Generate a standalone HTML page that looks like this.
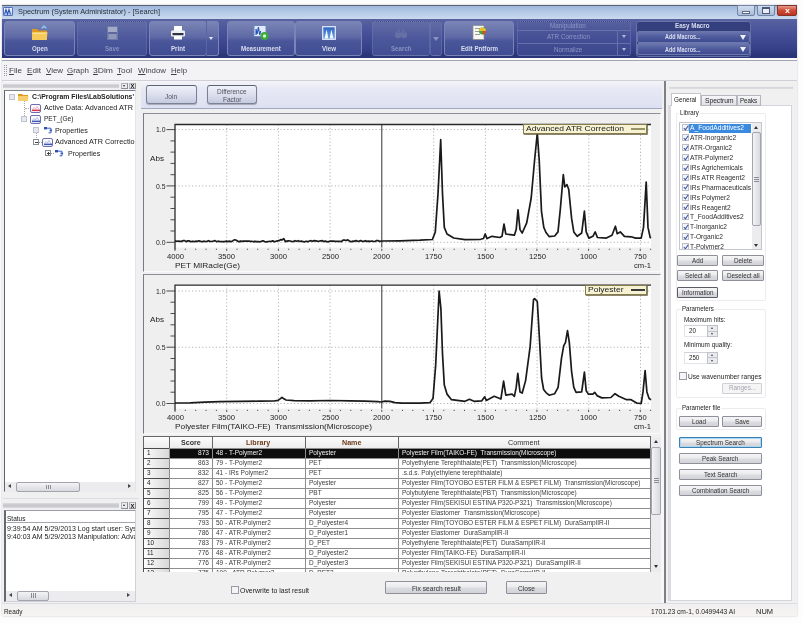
<!DOCTYPE html>
<html><head><meta charset="utf-8"><title>Spectrum</title><style>
*{box-sizing:border-box;margin:0;padding:0}
html,body{width:803px;height:623px;overflow:hidden;background:#fdfdfd;font-family:"Liberation Sans",sans-serif;}
body{position:relative;filter:blur(0.5px)}
.a{position:absolute}
.t{position:absolute;white-space:nowrap;line-height:1;transform-origin:0 50%}
.btn{position:absolute;border:1px solid #8f909a;border-radius:1px;background:linear-gradient(#f5f5f7,#ebebee 48%,#dcdde1 52%,#d2d3d9)}
.tb{position:absolute;top:21px;height:35px;border:1px solid #7a84b6;border-radius:3px;background:linear-gradient(#7a84b5,#5f6aa6 45%,#4a569a 58%,#414d93);}
.tb.dis{background:linear-gradient(#616ca6,#4c589b 50%,#424e94);border:1px dotted #6f7ab0}
</style></head><body>
<div class="a" style="left:2px;top:5px;width:795px;height:611px;background:#f0f0f1;box-shadow:0 0 2px #c4c8d0"></div>
<div class="a" style="left:2px;top:5px;width:795px;height:14px;background:linear-gradient(#9db7db,#b6cbe7 50%,#c9d9ee);border-top:1px solid #5c6474"></div>
<div class="a" style="left:3px;top:7px;width:10px;height:9px;background:linear-gradient(#f4f7fc,#b9cdf0);border:1px solid #5570b4;border-radius:1px"></div>
<svg class="a" style="left:4px;top:8px" width="8" height="7"><path d="M0.5 6.5l1.5-5 1.5 5 1.5-5 1.5 5" stroke="#2f55b4" stroke-width="1.1" fill="none"/></svg>
<div class="t" style="left:18.0px;top:8.4px;font-size:8px;color:#2a2f3a;transform:scaleX(0.920);">Spectrum (System Administrator) - [Search]</div>
<div class="a" style="left:737px;top:5px;width:18px;height:11px;background:linear-gradient(#d2deef,#a9bbd8);border:1px solid #7385a5;border-radius:0 0 2px 2px"></div>
<div class="a" style="left:742px;top:11px;width:8px;height:3px;background:#fff;border:1px solid #5a6a88"></div>
<div class="a" style="left:757px;top:5px;width:18px;height:11px;background:linear-gradient(#d2deef,#a9bbd8);border:1px solid #7385a5;border-radius:0 0 2px 2px"></div>
<div class="a" style="left:762px;top:7px;width:8px;height:7px;border:1px solid #4a5a78;border-top-width:2px;background:#e8eef8"></div>
<div class="a" style="left:777px;top:5px;width:20px;height:11px;background:linear-gradient(#e39a88,#cf4a34 50%,#bb3420);border:1px solid #84332a;border-radius:0 0 2px 2px"></div>
<div class="t" style="left:784.6px;top:6.9px;font-size:8px;font-weight:bold;color:#fff;transform:scaleX(1.100);">x</div>
<div class="a" style="left:2px;top:19px;width:795px;height:39px;background:linear-gradient(#5863a1,#46519a 35%,#36418a 75%,#2b3679 93%,#2a3577)"></div>
<div class="a" style="left:2px;top:58px;width:795px;height:2px;background:#fbfbfc"></div>
<div class="tb" style="left:4px;width:71px"><svg class="a" style="left:50%;margin-left:-8.5px;top:3px" width="17" height="16" viewBox="0 0 17 16"><path d="M1 4h5l1.5 1.5H16V15H1z" fill="#dc9a22"/><path d="M1 7h15.5l-0.8 8H1z" fill="#f6cb5a"/><path d="M2 8h13v1H2z" fill="#fbe29a"/><path d="M10 3l3-3 3 3-1.5 0.8-1.5-1.6-1.5 1.6z" fill="#86c8ee"/></svg></div>
<div class="t" style="left:31.6px;top:45.5px;font-size:6.5px;font-weight:bold;color:#dadef0;transform:scaleX(0.950);">Open</div>
<div class="tb dis" style="left:77px;width:70px"><svg class="a" style="left:50%;margin-left:-6.5px;top:4px" width="13" height="14" viewBox="0 0 13 14"><rect x="1" y="0" width="11" height="14" fill="#6e78a6"/><rect x="2" y="1" width="9" height="5" fill="#a2aac8"/><rect x="2.5" y="8" width="8" height="5" fill="#8f98bc"/><rect x="2.5" y="6.5" width="8" height="1" fill="#4a568f"/></svg></div>
<div class="t" style="left:104.8px;top:45.5px;font-size:6.5px;font-weight:bold;color:#8791c0;transform:scaleX(0.950);">Save</div>
<div class="tb" style="left:149px;width:58px"><svg class="a" style="left:50%;margin-left:-8.0px;top:4px" width="16" height="14" viewBox="0 0 16 14"><rect x="4" y="0" width="8" height="5" fill="#fdfdfd"/><rect x="1" y="4.5" width="14" height="6" rx="1.2" fill="#eceef4"/><rect x="2.5" y="7" width="11" height="2.2" fill="#2f3442"/><rect x="4" y="10" width="8" height="3.5" fill="#fdfdfd"/></svg></div>
<div class="t" style="left:171.0px;top:45.5px;font-size:6.5px;font-weight:bold;color:#dadef0;transform:scaleX(0.950);">Print</div>
<div class="tb" style="left:206px;width:13px;border-left-color:#5a66a3;border-radius:0 3px 3px 0"></div>
<div class="a" style="left:209px;top:36.5px;border:2.7px solid transparent;border-top:3.6px solid #e6e9f6"></div>
<div class="tb" style="left:227px;width:68px"><svg class="a" style="left:50%;margin-left:-8.0px;top:3px" width="16" height="16" viewBox="0 0 16 16"><rect x="1" y="0.5" width="12" height="11" fill="#e3ebf8" stroke="#6a86c2" stroke-width="1"/><path d="M3 10V4l1.2 5 1.2-7 1.3 8 1-4" stroke="#2b58b8" stroke-width="1.1" fill="none"/><circle cx="11.5" cy="11" r="4" fill="#3aa93a"/><circle cx="11.5" cy="11" r="1.7" fill="#d4f0cf"/></svg></div>
<div class="t" style="left:241.1px;top:45.5px;font-size:6.5px;font-weight:bold;color:#dadef0;transform:scaleX(0.950);">Measurement</div>
<div class="tb" style="left:295px;width:67px"><svg class="a" style="left:50%;margin-left:-7.0px;top:4px" width="14" height="14" viewBox="0 0 14 14"><defs><linearGradient id="vg" x1="0" y1="0" x2="0" y2="1"><stop offset="0" stop-color="#2f62c0"/><stop offset="1" stop-color="#6aa6ea"/></linearGradient></defs><rect x="0.7" y="0.7" width="12.6" height="12.6" fill="url(#vg)" stroke="#e8eefa" stroke-width="1.2"/><path d="M2.5 12.5l2.2-9 1.6 9h1.4l1.6-9 2.2 9z" fill="#f4f8ff"/></svg></div>
<div class="t" style="left:321.5px;top:45.5px;font-size:6.5px;font-weight:bold;color:#dadef0;transform:scaleX(0.950);">View</div>
<div class="tb dis" style="left:372px;width:58px"><svg class="a" style="left:50%;margin-left:-8.0px;top:5px" width="16" height="12" viewBox="0 0 16 12"><circle cx="5" cy="8" r="3.2" fill="#6570a6"/><circle cx="11" cy="8" r="3.2" fill="#6570a6"/><path d="M3 6l2-5h2v4h2V1h2l2 5z" fill="#5f6aa2"/></svg></div>
<div class="t" style="left:390.7px;top:45.5px;font-size:6.5px;font-weight:bold;color:#8791c0;transform:scaleX(0.950);">Search</div>
<div class="tb dis" style="left:430px;width:12px"></div>
<div class="a" style="left:433px;top:37px;border:3px solid transparent;border-top:4px solid #8a93c0"></div>
<div class="tb" style="left:444px;width:70px"><svg class="a" style="left:50%;margin-left:-7.5px;top:3px" width="15" height="16" viewBox="0 0 15 16"><rect x="1" y="0.5" width="11" height="14" fill="#f6f6f2" stroke="#8a8a8a" stroke-width="0.7"/><rect x="3" y="3" width="5" height="1" fill="#9a9a9a"/><rect x="3" y="6" width="4" height="1" fill="#9a9a9a"/><rect x="3" y="9" width="5" height="1" fill="#9a9a9a"/><circle cx="10.5" cy="6" r="3.6" fill="#3fa83f"/><path d="M7 6a3.5 3.5 0 0 1 7 0z" fill="#e8c02a"/><path d="M10.5 6v3.6a3.6 3.6 0 0 0 3.6-3.6z" fill="#d44a2a"/></svg></div>
<div class="t" style="left:460.5px;top:45.5px;font-size:6.5px;font-weight:bold;color:#dadef0;transform:scaleX(0.950);">Edit Pntform</div>
<div class="tb dis" style="left:517px;width:114px;background:linear-gradient(#55609f,#444f95 50%,#3b478d)"></div>
<div class="t" style="left:550.1px;top:23.0px;font-size:6.5px;color:#8d97c5;transform:scaleX(0.970);">Manipulation</div>
<div class="a" style="left:518px;top:30px;width:112px;height:1px;background:#6671ab"></div>
<div class="t" style="left:546.5px;top:34.0px;font-size:6.5px;color:#8d97c5;transform:scaleX(0.970);">ATR Correction</div>
<div class="a" style="left:621.8px;top:35.3px;border:2.5px solid transparent;border-top:3.5px solid #b2badc"></div>
<div class="a" style="left:518px;top:42.5px;width:112px;height:1px;background:#6671ab"></div>
<div class="t" style="left:553.8px;top:46.6px;font-size:6.5px;color:#8d97c5;transform:scaleX(0.970);">Normalize</div>
<div class="a" style="left:621.8px;top:47.9px;border:2.5px solid transparent;border-top:3.5px solid #b2badc"></div>
<div class="a" style="left:617px;top:30px;width:1px;height:25px;background:#6671ab"></div>
<div class="a" style="left:636px;top:21px;width:115px;height:35.5px;border:1px solid #6671a8;border-radius:3px;background:#343f7e"></div>
<div class="t" style="left:675.2px;top:22.8px;font-size:6.5px;font-weight:bold;color:#dadef0;transform:scaleX(0.955);">Easy Macro</div>
<div class="a" style="left:637px;top:30.7px;width:113px;height:12px;border:1px solid #6b76ad;border-radius:2px;background:linear-gradient(#6a75ad,#4d5a9c 50%,#3e4b91)"></div>
<div class="t" style="left:665.2px;top:33.9px;font-size:6.5px;font-weight:bold;color:#dadef0;transform:scaleX(0.833);">Add Macros...</div>
<div class="a" style="left:740px;top:34.7px;border:3.5px solid transparent;border-top:5px solid #f0f2fa"></div>
<div class="a" style="left:637px;top:43.3px;width:113px;height:12px;border:1px solid #6b76ad;border-radius:2px;background:linear-gradient(#6a75ad,#4d5a9c 50%,#3e4b91)"></div>
<div class="t" style="left:665.2px;top:46.5px;font-size:6.5px;font-weight:bold;color:#dadef0;transform:scaleX(0.833);">Add Macros...</div>
<div class="a" style="left:740px;top:47.3px;border:3.5px solid transparent;border-top:5px solid #f0f2fa"></div>
<div class="a" style="left:2px;top:60px;width:795px;height:1.3px;background:#a4a6ae"></div>
<div class="a" style="left:2px;top:61px;width:795px;height:19px;background:#f3f3f5"></div>
<div class="a" style="left:4px;top:65px;width:3px;height:11px;border-left:1px dotted #9a9aa5;border-right:1px dotted #9a9aa5"></div>
<div class="t" style="left:9.3px;top:66.7px;font-size:8px;color:#40424a;transform:scaleX(1.008);"><u>F</u>ile</div>
<div class="t" style="left:27.0px;top:66.7px;font-size:8px;color:#40424a;transform:scaleX(1.016);"><u>E</u>dit</div>
<div class="t" style="left:46.0px;top:66.7px;font-size:8px;color:#40424a;transform:scaleX(0.989);"><u>V</u>iew</div>
<div class="t" style="left:67.0px;top:66.7px;font-size:8px;color:#40424a;transform:scaleX(0.989);"><u>G</u>raph</div>
<div class="t" style="left:93.0px;top:66.7px;font-size:8px;color:#40424a;transform:scaleX(1.071);"><u>3</u>Dim</div>
<div class="t" style="left:117.0px;top:66.7px;font-size:8px;color:#40424a;transform:scaleX(1.022);"><u>T</u>ool</div>
<div class="t" style="left:138.0px;top:66.7px;font-size:8px;color:#40424a;transform:scaleX(0.984);"><u>W</u>indow</div>
<div class="t" style="left:171.0px;top:66.7px;font-size:8px;color:#40424a;transform:scaleX(0.972);"><u>H</u>elp</div>
<div class="a" style="left:2px;top:80px;width:795px;height:1px;background:#d0d1d8"></div>
<div class="a" style="left:2px;top:81px;width:139px;height:522px;background:#f0f0f1"></div>
<div class="a" style="left:3px;top:81px;width:136px;height:1px;background:#fafafa"></div>
<div class="a" style="left:3px;top:83.5px;width:116px;height:4.5px;background:linear-gradient(#dcdcdf,#c6c6ca 50%,#d9d9dc)"></div>
<div class="a" style="left:120.5px;top:82.5px;width:7px;height:6.5px;background:#ebebee;border:1px solid #b4b4bc;border-right-color:#8a8a94;border-bottom-color:#8a8a94"></div>
<div class="a" style="left:122.5px;top:85px;border:1.5px solid transparent;border-top:2px solid #333;border-bottom:0"></div>
<div class="a" style="left:129px;top:82.5px;width:6.5px;height:6.5px;background:#ebebee;border:1px solid #b4b4bc;border-right-color:#8a8a94;border-bottom-color:#8a8a94"></div>
<div class="t" style="left:130.4px;top:82.1px;font-size:7px;font-weight:bold;color:#222;transform:scaleX(1.000);">x</div>
<div class="a" style="left:4px;top:90px;width:131.5px;height:402px;background:#fff;border:1px solid #e4e4e8;border-left:1px solid #62646e;border-top:1px solid #7d7f89"></div>
<div class="t" style="left:31.7px;top:93.4px;font-size:8px;font-weight:bold;color:#222;transform:scaleX(0.859);">C:\Program Files\LabSolutions'</div>
<div class="t" style="left:43.7px;top:104.1px;font-size:8px;color:#222;transform:scaleX(0.911);">Active Data: Advanced ATR</div>
<div class="t" style="left:43.7px;top:115.3px;font-size:8px;color:#222;transform:scaleX(0.816);">PET_(Ge)</div>
<div class="t" style="left:55.3px;top:126.6px;font-size:8px;color:#222;transform:scaleX(0.900);">Properties</div>
<div class="a" style="left:55.3px;top:136px;width:80px;height:12px;overflow:hidden">
<div class="t" style="left:0.0px;top:2.3px;font-size:8px;color:#222;transform:scaleX(0.910);">Advanced ATR Correction</div>
</div>
<div class="t" style="left:67.6px;top:149.6px;font-size:8px;color:#222;transform:scaleX(0.886);">Properties</div>
<div class="a" style="left:9px;top:94px;width:6px;height:6px;border:1px solid #c0c3d0;background:#e6e9f2"></div>
<svg class="a" style="left:18px;top:92.5px" width="11" height="9"><path d="M0 1h4l1 1h5v6H0z" fill="#dc9a22"/><path d="M0 3h10.5l-0.5 5H0z" fill="#f6cf6c"/></svg>
<div class="a" style="left:24px;top:101px;width:1px;height:15px;border-left:1px dotted #aaa"></div>
<div class="a" style="left:25px;top:108px;width:4px;height:1px;border-top:1px dotted #aaa"></div>
<div class="a" style="left:30px;top:104px;width:11px;height:8.5px;border:1.2px solid #6c6cae;background:#fbfbfe;border-radius:2px"></div>
<svg class="a" style="left:31.5px;top:105.5px" width="8" height="6"><rect x="0" y="3.6" width="8" height="1.5" fill="#d8334d"/><path d="M0.5 3.5l1.5-2 1.5 1.5 1.5-2.5 2 3" stroke="#d8334d" stroke-width="0.6" fill="none" opacity="0.6"/></svg>
<div class="a" style="left:30px;top:115px;width:11px;height:8.5px;border:1.2px solid #6c6cae;background:#fbfbfe;border-radius:2px"></div>
<svg class="a" style="left:31.5px;top:116.5px" width="8" height="6"><rect x="0" y="3.6" width="8" height="1.5" fill="#3a57b8"/><path d="M0.5 3.5l1.5-2 1.5 1.5 1.5-2.5 2 3" stroke="#3a57b8" stroke-width="0.6" fill="none" opacity="0.6"/></svg>
<div class="a" style="left:21px;top:116px;width:6px;height:6px;border:1px solid #c0c3d0;background:#e6e9f2"></div>
<div class="a" style="left:33px;top:127px;width:6px;height:6px;border:1px solid #c0c3d0;background:#e6e9f2"></div>
<svg class="a" style="left:43.5px;top:127px" width="9" height="7"><rect x="0" y="0" width="3" height="2.4" fill="#2f4fb0"/><path d="M3 1.2h4v4.6H4.5" stroke="#3b5fc4" stroke-width="1" fill="none"/><rect x="5.5" y="2.6" width="2.6" height="1.6" fill="#3b5fc4"/></svg>
<div class="a" style="left:36px;top:133px;width:1px;height:5px;border-left:1px dotted #aaa"></div>
<div class="a" style="left:33px;top:139px;width:6px;height:6px;border:1px solid #8a8c98;background:#fff"></div>
<div class="a" style="left:34.5px;top:141.5px;width:3px;height:1px;background:#444"></div>
<div class="a" style="left:39px;top:142px;width:3px;height:1px;border-top:1px dotted #999"></div>
<div class="a" style="left:42px;top:138px;width:11px;height:8.5px;border:1.2px solid #6c6cae;background:#fbfbfe;border-radius:2px"></div>
<svg class="a" style="left:43.5px;top:139.5px" width="8" height="6"><rect x="0" y="3.6" width="8" height="1.5" fill="#3a57b8"/><path d="M0.5 3.5l1.5-2 1.5 1.5 1.5-2.5 2 3" stroke="#3a57b8" stroke-width="0.6" fill="none" opacity="0.6"/></svg>
<div class="a" style="left:45px;top:150px;width:6px;height:6px;border:1px solid #8a8c98;background:#fff"></div>
<div class="a" style="left:46.5px;top:152.5px;width:3px;height:1px;background:#444"></div>
<div class="a" style="left:47.5px;top:151.5px;width:1px;height:3px;background:#444"></div>
<div class="a" style="left:51px;top:153px;width:3px;height:1px;border-top:1px dotted #999"></div>
<svg class="a" style="left:54.8px;top:150px" width="9" height="7"><rect x="0" y="0" width="3" height="2.4" fill="#2f4fb0"/><path d="M3 1.2h4v4.6H4.5" stroke="#3b5fc4" stroke-width="1" fill="none"/><rect x="5.5" y="2.6" width="2.6" height="1.6" fill="#3b5fc4"/></svg>
<div class="a" style="left:5px;top:482px;width:130px;height:9.5px;background:#ececee"></div>
<div class="a" style="left:16px;top:482px;width:64px;height:9.5px;border:1px solid #a3a4ad;border-radius:2px;background:linear-gradient(#f4f4f6,#d8d9df)"></div>
<div class="a" style="left:45.5px;top:484.5px;width:1px;height:4.5px;background:#8a8c96"></div>
<div class="a" style="left:47.5px;top:484.5px;width:1px;height:4.5px;background:#8a8c96"></div>
<div class="a" style="left:49.5px;top:484.5px;width:1px;height:4.5px;background:#8a8c96"></div>
<div class="a" style="left:8px;top:484.3px;border:2.5px solid transparent;border-right:3px solid #444;border-left:0"></div>
<div class="a" style="left:128px;top:484.3px;border:2.5px solid transparent;border-left:3px solid #444;border-right:0"></div>
<div class="a" style="left:3px;top:497.5px;width:136px;height:1.5px;background:#dcdce0"></div>
<div class="a" style="left:3px;top:503px;width:116px;height:5px;background:linear-gradient(#dcdcdf,#c6c6ca 50%,#d9d9dc)"></div>
<div class="a" style="left:120.5px;top:502px;width:7px;height:6.5px;background:#ebebee;border:1px solid #b4b4bc;border-right-color:#8a8a94;border-bottom-color:#8a8a94"></div>
<div class="a" style="left:122.5px;top:504px;border:1.5px solid transparent;border-bottom:2px solid #333;border-top:0"></div>
<div class="a" style="left:129px;top:502px;width:6.5px;height:6.5px;background:#ebebee;border:1px solid #b4b4bc;border-right-color:#8a8a94;border-bottom-color:#8a8a94"></div>
<div class="t" style="left:130.4px;top:501.6px;font-size:7px;font-weight:bold;color:#222;transform:scaleX(1.000);">x</div>
<div class="a" style="left:4px;top:510px;width:131.5px;height:92px;background:#fff;border:1px solid #d0d1d8;border-left:2px solid #666872;border-top:1px solid #9a9ca6"></div>
<div class="t" style="left:7.0px;top:514.8px;font-size:7.5px;color:#222;transform:scaleX(0.870);">Status</div>
<div class="a" style="left:6px;top:522px;width:129px;height:1px;background:#a4a6b0"></div>
<div class="a" style="left:6px;top:524px;width:129px;height:18px;overflow:hidden">
<div class="t" style="left:0.5px;top:1.1px;font-size:7.3px;color:#222;transform:scaleX(0.965);">9:39:54 AM 5/29/2013 Log start user: System Administrator</div>
<div class="t" style="left:0.5px;top:8.9px;font-size:7.3px;color:#222;transform:scaleX(0.965);">9:40:03 AM 5/29/2013 Manipulation: Advanced ATR</div>
</div>
<div class="a" style="left:6px;top:590.5px;width:129px;height:10px;background:#ececee"></div>
<div class="a" style="left:17px;top:590.5px;width:32px;height:10px;border:1px solid #a3a4ad;border-radius:2px;background:linear-gradient(#f4f4f6,#d8d9df)"></div>
<div class="a" style="left:30.5px;top:593.3px;width:1px;height:4.5px;background:#8a8c96"></div>
<div class="a" style="left:32.5px;top:593.3px;width:1px;height:4.5px;background:#8a8c96"></div>
<div class="a" style="left:34.5px;top:593.3px;width:1px;height:4.5px;background:#8a8c96"></div>
<div class="a" style="left:9px;top:593px;border:2.5px solid transparent;border-right:3px solid #444;border-left:0"></div>
<div class="a" style="left:127px;top:593px;border:2.5px solid transparent;border-left:3px solid #444;border-right:0"></div>
<div class="a" style="left:141px;top:81px;width:521px;height:27.5px;background:linear-gradient(#f5f5f9,#e6e8f5 30%,#dde0f1)"></div>
<div class="a" style="left:141px;top:107.6px;width:521px;height:1.6px;background:#a4a8be"></div>
<div class="a" style="left:141px;top:109.2px;width:524px;height:494px;background:#f0f0f1"></div>
<div class="a" style="left:146px;top:84.5px;width:51px;height:19.5px;border:1px solid #7c8194;border-top-color:#5e6272;border-radius:3px;background:linear-gradient(#f0f2f9,#dcdfee 50%,#c6cadf);box-shadow:0 1px 1px #a5a8ba"></div>
<div class="t" style="left:165.4px;top:92.5px;font-size:7px;color:#50535e;transform:scaleX(0.950);">Join</div>
<div class="a" style="left:207px;top:84.5px;width:50px;height:19.5px;border:1px solid #7c8194;border-top-color:#5e6272;border-radius:3px;background:linear-gradient(#f0f2f9,#dcdfee 50%,#c6cadf);box-shadow:0 1px 1px #a5a8ba"></div>
<div class="t" style="left:217.2px;top:87.7px;font-size:7px;color:#50535e;transform:scaleX(0.930);">Difference</div>
<div class="t" style="left:222.8px;top:95.7px;font-size:7px;color:#50535e;transform:scaleX(0.930);">Factor</div>
<div class="a" style="left:143px;top:112.5px;width:518px;height:159.5px;background:#efeff0;border:1px solid #fafafa;border-left:1px solid #787a84;border-top:1.5px solid #8d8f98"></div>
<svg class="a" style="left:0;top:0" width="803" height="623" viewBox="0 0 803 623"><rect x="175" y="124.5" width="476" height="123.0" fill="#fff"/><line x1="175" x2="651" y1="129.6" y2="129.6" stroke="#b4b4b4" stroke-width="1" stroke-dasharray="1.2 2.2"/><line x1="175" x2="651" y1="185.95" y2="185.95" stroke="#b4b4b4" stroke-width="1" stroke-dasharray="1.2 2.2"/><line x1="175" x2="651" y1="242.3" y2="242.3" stroke="#b4b4b4" stroke-width="1" stroke-dasharray="1.2 2.2"/><line x1="226.7" x2="226.7" y1="124.5" y2="247.5" stroke="#b4b4b4" stroke-width="1" stroke-dasharray="1.2 2.2"/><line x1="278.4" x2="278.4" y1="124.5" y2="247.5" stroke="#b4b4b4" stroke-width="1" stroke-dasharray="1.2 2.2"/><line x1="330.1" x2="330.1" y1="124.5" y2="247.5" stroke="#b4b4b4" stroke-width="1" stroke-dasharray="1.2 2.2"/><line x1="433.7" x2="433.7" y1="124.5" y2="247.5" stroke="#b4b4b4" stroke-width="1" stroke-dasharray="1.2 2.2"/><line x1="485.4" x2="485.4" y1="124.5" y2="247.5" stroke="#b4b4b4" stroke-width="1" stroke-dasharray="1.2 2.2"/><line x1="537.1" x2="537.1" y1="124.5" y2="247.5" stroke="#b4b4b4" stroke-width="1" stroke-dasharray="1.2 2.2"/><line x1="588.8" x2="588.8" y1="124.5" y2="247.5" stroke="#b4b4b4" stroke-width="1" stroke-dasharray="1.2 2.2"/><line x1="640.5" x2="640.5" y1="124.5" y2="247.5" stroke="#b4b4b4" stroke-width="1" stroke-dasharray="1.2 2.2"/><line x1="381.8" x2="381.8" y1="124.5" y2="247.5" stroke="#333" stroke-width="1"/><path d="M175 249.5V124.5H651" fill="none" stroke="#2a2a2a" stroke-width="1.3"/><line x1="166.5" x2="175" y1="129.6" y2="129.6" stroke="#3a3a3a" stroke-width="0.9"/><line x1="170.5" x2="175" y1="140.9" y2="140.9" stroke="#3a3a3a" stroke-width="0.9"/><line x1="170.5" x2="175" y1="152.1" y2="152.1" stroke="#3a3a3a" stroke-width="0.9"/><line x1="170.5" x2="175" y1="163.4" y2="163.4" stroke="#3a3a3a" stroke-width="0.9"/><line x1="170.5" x2="175" y1="174.7" y2="174.7" stroke="#3a3a3a" stroke-width="0.9"/><line x1="166.5" x2="175" y1="185.9" y2="185.9" stroke="#3a3a3a" stroke-width="0.9"/><line x1="170.5" x2="175" y1="197.2" y2="197.2" stroke="#3a3a3a" stroke-width="0.9"/><line x1="170.5" x2="175" y1="208.5" y2="208.5" stroke="#3a3a3a" stroke-width="0.9"/><line x1="170.5" x2="175" y1="219.8" y2="219.8" stroke="#3a3a3a" stroke-width="0.9"/><line x1="170.5" x2="175" y1="231.0" y2="231.0" stroke="#3a3a3a" stroke-width="0.9"/><line x1="166.5" x2="175" y1="242.3" y2="242.3" stroke="#3a3a3a" stroke-width="0.9"/><rect x="174.5" y="248.7" width="1" height="2.2" fill="#555"/><rect x="184.8" y="248.7" width="1" height="1.2" fill="#555"/><rect x="195.2" y="248.7" width="1" height="1.2" fill="#555"/><rect x="205.5" y="248.7" width="1" height="1.2" fill="#555"/><rect x="215.9" y="248.7" width="1" height="1.2" fill="#555"/><rect x="226.2" y="248.7" width="1" height="2.2" fill="#555"/><rect x="236.5" y="248.7" width="1" height="1.2" fill="#555"/><rect x="246.9" y="248.7" width="1" height="1.2" fill="#555"/><rect x="257.2" y="248.7" width="1" height="1.2" fill="#555"/><rect x="267.6" y="248.7" width="1" height="1.2" fill="#555"/><rect x="277.9" y="248.7" width="1" height="2.2" fill="#555"/><rect x="288.2" y="248.7" width="1" height="1.2" fill="#555"/><rect x="298.6" y="248.7" width="1" height="1.2" fill="#555"/><rect x="308.9" y="248.7" width="1" height="1.2" fill="#555"/><rect x="319.3" y="248.7" width="1" height="1.2" fill="#555"/><rect x="329.6" y="248.7" width="1" height="2.2" fill="#555"/><rect x="339.9" y="248.7" width="1" height="1.2" fill="#555"/><rect x="350.3" y="248.7" width="1" height="1.2" fill="#555"/><rect x="360.6" y="248.7" width="1" height="1.2" fill="#555"/><rect x="371.0" y="248.7" width="1" height="1.2" fill="#555"/><rect x="381.3" y="248.7" width="1" height="2.2" fill="#555"/><rect x="391.6" y="248.7" width="1" height="1.2" fill="#555"/><rect x="402.0" y="248.7" width="1" height="1.2" fill="#555"/><rect x="412.3" y="248.7" width="1" height="1.2" fill="#555"/><rect x="422.7" y="248.7" width="1" height="1.2" fill="#555"/><rect x="433.0" y="248.7" width="1" height="2.2" fill="#555"/><rect x="443.3" y="248.7" width="1" height="1.2" fill="#555"/><rect x="453.7" y="248.7" width="1" height="1.2" fill="#555"/><rect x="464.0" y="248.7" width="1" height="1.2" fill="#555"/><rect x="474.4" y="248.7" width="1" height="1.2" fill="#555"/><rect x="484.7" y="248.7" width="1" height="2.2" fill="#555"/><rect x="495.0" y="248.7" width="1" height="1.2" fill="#555"/><rect x="505.4" y="248.7" width="1" height="1.2" fill="#555"/><rect x="515.7" y="248.7" width="1" height="1.2" fill="#555"/><rect x="526.1" y="248.7" width="1" height="1.2" fill="#555"/><rect x="536.4" y="248.7" width="1" height="2.2" fill="#555"/><rect x="546.7" y="248.7" width="1" height="1.2" fill="#555"/><rect x="557.1" y="248.7" width="1" height="1.2" fill="#555"/><rect x="567.4" y="248.7" width="1" height="1.2" fill="#555"/><rect x="577.8" y="248.7" width="1" height="1.2" fill="#555"/><rect x="588.1" y="248.7" width="1" height="2.2" fill="#555"/><rect x="598.4" y="248.7" width="1" height="1.2" fill="#555"/><rect x="608.8" y="248.7" width="1" height="1.2" fill="#555"/><rect x="619.1" y="248.7" width="1" height="1.2" fill="#555"/><rect x="629.5" y="248.7" width="1" height="1.2" fill="#555"/><rect x="639.8" y="248.7" width="1" height="2.2" fill="#555"/><rect x="650.1" y="248.7" width="1" height="1.2" fill="#555"/><polyline points="175.0,240.9 176.6,241.3 178.2,241.0 179.8,241.3 181.4,241.4 183.0,240.7 184.6,240.6 186.2,241.6 187.8,240.9 189.4,240.9 191.0,241.8 192.6,241.2 194.2,241.6 195.8,241.2 197.4,241.4 199.0,240.8 200.6,241.4 202.2,241.6 203.8,241.2 205.4,241.5 207.0,241.4 208.6,240.7 210.2,241.5 211.8,241.3 213.4,241.0 215.0,240.6 216.6,241.6 218.2,241.2 219.8,241.5 221.4,241.7 223.0,241.5 224.6,241.7 226.2,241.1 227.8,241.6 229.4,241.1 231.0,241.7 232.6,240.9 234.2,239.9 235.8,240.0 237.4,240.9 239.0,241.8 240.6,241.1 242.2,241.4 243.8,241.0 245.4,241.2 247.0,241.1 248.6,241.0 250.2,241.3 251.8,241.3 253.4,241.7 255.0,241.4 256.6,241.7 258.2,241.6 259.8,241.8 261.4,241.4 263.0,240.8 264.6,241.6 266.2,241.8 267.8,241.7 269.4,241.3 271.0,241.5 272.6,240.9 274.2,241.6 275.8,241.3 277.4,240.9 279.0,240.7 280.6,239.6 282.2,239.8 283.8,238.7 285.4,241.6 287.0,241.1 288.6,240.8 290.2,241.0 291.8,241.5 293.4,241.6 295.0,240.7 296.6,241.3 298.2,240.7 299.8,241.5 301.4,241.0 303.0,241.7 304.6,241.8 306.2,241.2 307.8,241.8 309.4,241.0 311.0,240.7 312.6,241.3 314.2,240.6 315.8,240.8 317.4,241.1 319.0,241.3 320.6,240.8 322.2,240.7 323.8,241.6 325.4,241.0 327.0,241.8 328.6,241.7 330.2,241.1 331.8,241.2 333.4,241.2 335.0,241.4 336.6,241.3 338.2,241.3 339.8,241.3 341.4,241.7 343.0,240.2 344.6,240.1 346.2,240.5 347.8,239.9 349.4,241.0 351.0,241.8 352.6,241.2 354.2,241.3 355.8,240.6 357.4,241.1 359.0,241.3 360.6,240.6 362.2,241.3 363.8,241.4 365.4,240.7 367.0,241.4 368.6,241.2 370.2,241.4 371.8,241.0 373.4,241.4 375.0,241.5 376.6,240.6 378.2,240.7 379.8,241.4 382.0,241.0 400.0,240.8 420.0,240.2 432.4,239.5 435.3,232.0 438.0,193.7 440.7,139.7 442.5,193.7 444.3,227.4 447.0,234.0 453.7,238.0 465.0,239.7 480.7,239.3 483.5,238.5 485.2,234.0 487.0,238.6 492.0,236.3 499.8,237.5 502.0,236.3 504.0,224.0 505.8,234.0 514.4,235.2 516.2,229.6 518.0,209.8 520.0,229.6 522.2,233.0 526.7,222.9 531.2,198.0 534.6,160.0 537.3,133.0 539.2,160.0 541.5,211.6 543.8,227.4 546.0,232.5 549.1,236.6 554.7,236.0 558.0,231.9 560.3,209.4 563.3,174.6 564.8,186.9 567.0,184.7 568.7,189.2 571.6,218.4 573.8,231.9 577.2,236.3 581.7,233.0 584.4,211.2 586.2,231.9 588.9,238.1 592.9,236.3 595.2,231.9 597.4,237.5 606.4,238.1 612.0,235.2 615.4,226.2 617.2,233.7 620.3,231.9 624.4,236.3 631.1,236.8 635.6,238.1 641.2,238.1 643.5,227.4 646.2,182.0 648.0,227.4 650.2,237.5 651.0,238.0" fill="none" stroke="#1a1a1a" stroke-width="1.7" stroke-linejoin="round"/></svg>
<div class="t" style="left:156.0px;top:126.3px;font-size:8px;color:#222;transform:scaleX(0.854);">1.0</div>
<div class="t" style="left:156.0px;top:182.6px;font-size:8px;color:#222;transform:scaleX(0.854);">0.5</div>
<div class="t" style="left:156.0px;top:239.0px;font-size:8px;color:#222;transform:scaleX(0.854);">0.0</div>
<div class="t" style="left:150.0px;top:154.5px;font-size:8px;color:#222;transform:scaleX(1.016);">Abs</div>
<div class="t" style="left:166.5px;top:252.9px;font-size:8px;color:#222;transform:scaleX(0.955);">4000</div>
<div class="t" style="left:218.2px;top:252.9px;font-size:8px;color:#222;transform:scaleX(0.955);">3500</div>
<div class="t" style="left:269.9px;top:252.9px;font-size:8px;color:#222;transform:scaleX(0.955);">3000</div>
<div class="t" style="left:321.6px;top:252.9px;font-size:8px;color:#222;transform:scaleX(0.955);">2500</div>
<div class="t" style="left:373.3px;top:252.9px;font-size:8px;color:#222;transform:scaleX(0.955);">2000</div>
<div class="t" style="left:425.2px;top:252.9px;font-size:8px;color:#222;transform:scaleX(0.955);">1750</div>
<div class="t" style="left:476.9px;top:252.9px;font-size:8px;color:#222;transform:scaleX(0.955);">1500</div>
<div class="t" style="left:528.6px;top:252.9px;font-size:8px;color:#222;transform:scaleX(0.955);">1250</div>
<div class="t" style="left:580.3px;top:252.9px;font-size:8px;color:#222;transform:scaleX(0.955);">1000</div>
<div class="t" style="left:634.2px;top:252.9px;font-size:8px;color:#222;transform:scaleX(0.944);">750</div>
<div class="t" style="left:634.0px;top:261.9px;font-size:8px;color:#222;transform:scaleX(0.956);">cm-1</div>
<div class="t" style="left:174.7px;top:261.9px;font-size:8px;color:#222;transform:scaleX(1.032);">PET MIRacle(Ge)</div>
<div class="a" style="left:523px;top:124.0px;width:124px;height:10px;background:#f6f2d2;border:1px solid #867b4c;box-shadow:0.7px 0.7px 0 #5a5234"></div>
<div class="t" style="left:526.0px;top:125.4px;font-size:8px;color:#222;transform:scaleX(1.066);">Advanced ATR Correction</div>
<div class="a" style="left:631px;top:128.1px;width:14px;height:2.3px;background:#979468"></div>
<div class="a" style="left:143px;top:273.5px;width:518px;height:160px;background:#efeff0;border:1px solid #fafafa;border-left:1px solid #787a84;border-top:1.5px solid #8d8f98"></div>
<svg class="a" style="left:0;top:0" width="803" height="623" viewBox="0 0 803 623"><rect x="175" y="285.2" width="476" height="123.40000000000003" fill="#fff"/><line x1="175" x2="651" y1="291" y2="291" stroke="#b4b4b4" stroke-width="1" stroke-dasharray="1.2 2.2"/><line x1="175" x2="651" y1="347.25" y2="347.25" stroke="#b4b4b4" stroke-width="1" stroke-dasharray="1.2 2.2"/><line x1="175" x2="651" y1="403.5" y2="403.5" stroke="#b4b4b4" stroke-width="1" stroke-dasharray="1.2 2.2"/><line x1="226.7" x2="226.7" y1="285.2" y2="408.6" stroke="#b4b4b4" stroke-width="1" stroke-dasharray="1.2 2.2"/><line x1="278.4" x2="278.4" y1="285.2" y2="408.6" stroke="#b4b4b4" stroke-width="1" stroke-dasharray="1.2 2.2"/><line x1="330.1" x2="330.1" y1="285.2" y2="408.6" stroke="#b4b4b4" stroke-width="1" stroke-dasharray="1.2 2.2"/><line x1="433.7" x2="433.7" y1="285.2" y2="408.6" stroke="#b4b4b4" stroke-width="1" stroke-dasharray="1.2 2.2"/><line x1="485.4" x2="485.4" y1="285.2" y2="408.6" stroke="#b4b4b4" stroke-width="1" stroke-dasharray="1.2 2.2"/><line x1="537.1" x2="537.1" y1="285.2" y2="408.6" stroke="#b4b4b4" stroke-width="1" stroke-dasharray="1.2 2.2"/><line x1="588.8" x2="588.8" y1="285.2" y2="408.6" stroke="#b4b4b4" stroke-width="1" stroke-dasharray="1.2 2.2"/><line x1="640.5" x2="640.5" y1="285.2" y2="408.6" stroke="#b4b4b4" stroke-width="1" stroke-dasharray="1.2 2.2"/><line x1="381.8" x2="381.8" y1="285.2" y2="408.6" stroke="#333" stroke-width="1"/><path d="M175 410.6V285.2H651" fill="none" stroke="#2a2a2a" stroke-width="1.3"/><line x1="166.5" x2="175" y1="291.0" y2="291.0" stroke="#3a3a3a" stroke-width="0.9"/><line x1="170.5" x2="175" y1="302.2" y2="302.2" stroke="#3a3a3a" stroke-width="0.9"/><line x1="170.5" x2="175" y1="313.5" y2="313.5" stroke="#3a3a3a" stroke-width="0.9"/><line x1="170.5" x2="175" y1="324.8" y2="324.8" stroke="#3a3a3a" stroke-width="0.9"/><line x1="170.5" x2="175" y1="336.0" y2="336.0" stroke="#3a3a3a" stroke-width="0.9"/><line x1="166.5" x2="175" y1="347.2" y2="347.2" stroke="#3a3a3a" stroke-width="0.9"/><line x1="170.5" x2="175" y1="358.5" y2="358.5" stroke="#3a3a3a" stroke-width="0.9"/><line x1="170.5" x2="175" y1="369.8" y2="369.8" stroke="#3a3a3a" stroke-width="0.9"/><line x1="170.5" x2="175" y1="381.0" y2="381.0" stroke="#3a3a3a" stroke-width="0.9"/><line x1="170.5" x2="175" y1="392.2" y2="392.2" stroke="#3a3a3a" stroke-width="0.9"/><line x1="166.5" x2="175" y1="403.5" y2="403.5" stroke="#3a3a3a" stroke-width="0.9"/><rect x="174.5" y="409.8" width="1" height="2.2" fill="#555"/><rect x="184.8" y="409.8" width="1" height="1.2" fill="#555"/><rect x="195.2" y="409.8" width="1" height="1.2" fill="#555"/><rect x="205.5" y="409.8" width="1" height="1.2" fill="#555"/><rect x="215.9" y="409.8" width="1" height="1.2" fill="#555"/><rect x="226.2" y="409.8" width="1" height="2.2" fill="#555"/><rect x="236.5" y="409.8" width="1" height="1.2" fill="#555"/><rect x="246.9" y="409.8" width="1" height="1.2" fill="#555"/><rect x="257.2" y="409.8" width="1" height="1.2" fill="#555"/><rect x="267.6" y="409.8" width="1" height="1.2" fill="#555"/><rect x="277.9" y="409.8" width="1" height="2.2" fill="#555"/><rect x="288.2" y="409.8" width="1" height="1.2" fill="#555"/><rect x="298.6" y="409.8" width="1" height="1.2" fill="#555"/><rect x="308.9" y="409.8" width="1" height="1.2" fill="#555"/><rect x="319.3" y="409.8" width="1" height="1.2" fill="#555"/><rect x="329.6" y="409.8" width="1" height="2.2" fill="#555"/><rect x="339.9" y="409.8" width="1" height="1.2" fill="#555"/><rect x="350.3" y="409.8" width="1" height="1.2" fill="#555"/><rect x="360.6" y="409.8" width="1" height="1.2" fill="#555"/><rect x="371.0" y="409.8" width="1" height="1.2" fill="#555"/><rect x="381.3" y="409.8" width="1" height="2.2" fill="#555"/><rect x="391.6" y="409.8" width="1" height="1.2" fill="#555"/><rect x="402.0" y="409.8" width="1" height="1.2" fill="#555"/><rect x="412.3" y="409.8" width="1" height="1.2" fill="#555"/><rect x="422.7" y="409.8" width="1" height="1.2" fill="#555"/><rect x="433.0" y="409.8" width="1" height="2.2" fill="#555"/><rect x="443.3" y="409.8" width="1" height="1.2" fill="#555"/><rect x="453.7" y="409.8" width="1" height="1.2" fill="#555"/><rect x="464.0" y="409.8" width="1" height="1.2" fill="#555"/><rect x="474.4" y="409.8" width="1" height="1.2" fill="#555"/><rect x="484.7" y="409.8" width="1" height="2.2" fill="#555"/><rect x="495.0" y="409.8" width="1" height="1.2" fill="#555"/><rect x="505.4" y="409.8" width="1" height="1.2" fill="#555"/><rect x="515.7" y="409.8" width="1" height="1.2" fill="#555"/><rect x="526.1" y="409.8" width="1" height="1.2" fill="#555"/><rect x="536.4" y="409.8" width="1" height="2.2" fill="#555"/><rect x="546.7" y="409.8" width="1" height="1.2" fill="#555"/><rect x="557.1" y="409.8" width="1" height="1.2" fill="#555"/><rect x="567.4" y="409.8" width="1" height="1.2" fill="#555"/><rect x="577.8" y="409.8" width="1" height="1.2" fill="#555"/><rect x="588.1" y="409.8" width="1" height="2.2" fill="#555"/><rect x="598.4" y="409.8" width="1" height="1.2" fill="#555"/><rect x="608.8" y="409.8" width="1" height="1.2" fill="#555"/><rect x="619.1" y="409.8" width="1" height="1.2" fill="#555"/><rect x="629.5" y="409.8" width="1" height="1.2" fill="#555"/><rect x="639.8" y="409.8" width="1" height="2.2" fill="#555"/><rect x="650.1" y="409.8" width="1" height="1.2" fill="#555"/><polyline points="175.0,403.0 190.0,402.8 205.0,402.2 220.0,401.6 240.0,401.3 260.0,401.2 274.0,401.0 278.0,400.4 280.5,398.6 282.0,397.3 283.5,398.6 286.0,400.0 294.0,400.7 310.0,400.8 330.0,400.5 350.0,400.8 365.0,401.2 378.0,401.6 381.0,402.0 385.0,401.2 390.0,401.4 395.0,402.6 402.0,403.2 420.0,403.1 430.1,402.6 433.0,398.6 435.7,364.9 439.1,291.2 440.9,308.7 442.5,353.7 444.3,385.1 447.0,394.1 451.5,399.7 465.0,401.3 469.4,399.3 474.0,401.3 481.8,400.8 484.7,396.8 486.3,400.4 494.2,396.3 500.9,399.0 503.6,381.1 505.8,395.2 512.1,394.1 514.4,396.3 516.2,387.4 517.8,373.4 520.0,391.9 522.2,393.0 525.6,380.6 530.1,346.9 533.5,299.7 534.6,298.6 537.3,301.5 539.3,336.0 541.6,378.0 543.6,389.5 546.0,392.6 549.1,395.2 554.7,393.7 558.1,387.4 561.5,358.1 563.7,345.8 565.5,342.4 567.5,330.7 569.3,342.4 571.6,371.6 573.8,387.4 576.1,392.3 581.7,391.9 584.4,372.1 586.2,390.7 588.4,394.1 592.9,394.1 594.7,392.3 597.4,395.9 601.9,397.9 610.9,397.5 615.0,393.7 618.8,396.3 626.6,399.7 631.1,399.7 636.7,403.1 641.2,403.5 643.0,391.9 645.1,370.5 646.9,391.9 649.1,398.6 651.0,399.7" fill="none" stroke="#1a1a1a" stroke-width="1.7" stroke-linejoin="round"/></svg>
<div class="t" style="left:156.0px;top:287.7px;font-size:8px;color:#222;transform:scaleX(0.854);">1.0</div>
<div class="t" style="left:156.0px;top:343.9px;font-size:8px;color:#222;transform:scaleX(0.854);">0.5</div>
<div class="t" style="left:156.0px;top:400.2px;font-size:8px;color:#222;transform:scaleX(0.854);">0.0</div>
<div class="t" style="left:150.0px;top:315.9px;font-size:8px;color:#222;transform:scaleX(1.016);">Abs</div>
<div class="t" style="left:166.5px;top:414.0px;font-size:8px;color:#222;transform:scaleX(0.955);">4000</div>
<div class="t" style="left:218.2px;top:414.0px;font-size:8px;color:#222;transform:scaleX(0.955);">3500</div>
<div class="t" style="left:269.9px;top:414.0px;font-size:8px;color:#222;transform:scaleX(0.955);">3000</div>
<div class="t" style="left:321.6px;top:414.0px;font-size:8px;color:#222;transform:scaleX(0.955);">2500</div>
<div class="t" style="left:373.3px;top:414.0px;font-size:8px;color:#222;transform:scaleX(0.955);">2000</div>
<div class="t" style="left:425.2px;top:414.0px;font-size:8px;color:#222;transform:scaleX(0.955);">1750</div>
<div class="t" style="left:476.9px;top:414.0px;font-size:8px;color:#222;transform:scaleX(0.955);">1500</div>
<div class="t" style="left:528.6px;top:414.0px;font-size:8px;color:#222;transform:scaleX(0.955);">1250</div>
<div class="t" style="left:580.3px;top:414.0px;font-size:8px;color:#222;transform:scaleX(0.955);">1000</div>
<div class="t" style="left:634.2px;top:414.0px;font-size:8px;color:#222;transform:scaleX(0.944);">750</div>
<div class="t" style="left:634.0px;top:423.0px;font-size:8px;color:#222;transform:scaleX(0.956);">cm-1</div>
<div class="t" style="left:174.7px;top:423.0px;font-size:8px;color:#222;transform:scaleX(1.036);">Polyester Film(TAIKO-FE)&nbsp; Transmission(Microscope)</div>
<div class="a" style="left:585px;top:284.7px;width:62px;height:10px;background:#f6f2d2;border:1px solid #867b4c;box-shadow:0.7px 0.7px 0 #5a5234"></div>
<div class="t" style="left:588.0px;top:286.1px;font-size:8px;color:#222;transform:scaleX(1.065);">Polyester</div>
<div class="a" style="left:631px;top:289.4px;width:14px;height:1.3px;background:#3a3a3a"></div>
<div class="a" style="left:143px;top:436px;width:508px;height:136px;background:#fff;border:1px solid #666;border-left-width:1.5px"></div>
<div class="a" style="left:143px;top:436px;width:27px;height:13px;border:1px solid #666;background:linear-gradient(#fcfcfc,#ececec)"></div>
<div class="a" style="left:169px;top:436px;width:44px;height:13px;border:1px solid #666;background:linear-gradient(#fcfcfc,#ececec)"></div>
<div class="t" style="left:180.6px;top:439.1px;font-size:7.5px;font-weight:bold;color:#333;transform:scaleX(0.950);">Score</div>
<div class="a" style="left:212px;top:436px;width:94px;height:13px;border:1px solid #666;background:linear-gradient(#fcfcfc,#ececec)"></div>
<div class="t" style="left:246.4px;top:439.1px;font-size:7.5px;font-weight:bold;color:#6b3a1a;transform:scaleX(0.950);">Library</div>
<div class="a" style="left:305px;top:436px;width:94px;height:13px;border:1px solid #666;background:linear-gradient(#fcfcfc,#ececec)"></div>
<div class="t" style="left:341.8px;top:439.1px;font-size:7.5px;font-weight:bold;color:#6b3a1a;transform:scaleX(0.950);">Name</div>
<div class="a" style="left:398px;top:436px;width:253px;height:13px;border:1px solid #666;background:linear-gradient(#fcfcfc,#ececec)"></div>
<div class="t" style="left:508.2px;top:439.1px;font-size:7.5px;color:#333;transform:scaleX(0.970);">Comment</div>
<div class="a" style="left:143px;top:448.1px;width:508px;height:123.6px;overflow:hidden">
<div class="a" style="left:0px;top:0.0px;width:27px;height:11.3px;border:1.4px solid #4c4c4c;background:linear-gradient(90deg,#fdfdfd,#d8d8d8)"></div>
<div class="t" style="left:3.5px;top:2.3px;font-size:6.7px;color:#222;transform:scaleX(0.950);">1</div>
<div class="a" style="left:26px;top:0.0px;width:44px;height:11px;border:1px solid #8e8e8e;background:#0d0d0d"></div>
<div class="t" style="left:55.0px;top:2.3px;font-size:6.7px;color:#f0f0f0;transform:scaleX(0.985);">873</div>
<div class="a" style="left:69px;top:0.0px;width:94px;height:11px;border:1px solid #8e8e8e;background:#0d0d0d"></div>
<div class="t" style="left:72.5px;top:2.3px;font-size:6.7px;color:#f0f0f0;transform:scaleX(0.972);">48 - T-Polymer2</div>
<div class="a" style="left:162px;top:0.0px;width:94px;height:11px;border:1px solid #8e8e8e;background:#0d0d0d"></div>
<div class="t" style="left:165.5px;top:2.3px;font-size:6.7px;color:#f0f0f0;transform:scaleX(0.972);">Polyester</div>
<div class="a" style="left:255px;top:0.0px;width:253px;height:11px;border:1px solid #8e8e8e;background:#0d0d0d"></div>
<div class="t" style="left:258.5px;top:2.3px;font-size:6.7px;color:#f0f0f0;transform:scaleX(0.972);">Polyester Film(TAIKO-FE)&nbsp; Transmission(Microscope)</div>
<div class="a" style="left:0px;top:10.0px;width:27px;height:11.3px;border:1.4px solid #4c4c4c;background:linear-gradient(90deg,#fdfdfd,#d8d8d8)"></div>
<div class="t" style="left:3.5px;top:12.3px;font-size:6.7px;color:#222;transform:scaleX(0.950);">2</div>
<div class="a" style="left:26px;top:10.0px;width:44px;height:11px;border:1px solid #8e8e8e;background:#fff"></div>
<div class="t" style="left:55.0px;top:12.3px;font-size:6.7px;color:#3c3c3c;transform:scaleX(0.985);">863</div>
<div class="a" style="left:69px;top:10.0px;width:94px;height:11px;border:1px solid #8e8e8e;background:#fff"></div>
<div class="t" style="left:72.5px;top:12.3px;font-size:6.7px;color:#3c3c3c;transform:scaleX(0.972);">79 - T-Polymer2</div>
<div class="a" style="left:162px;top:10.0px;width:94px;height:11px;border:1px solid #8e8e8e;background:#fff"></div>
<div class="t" style="left:165.5px;top:12.3px;font-size:6.7px;color:#3c3c3c;transform:scaleX(0.972);">PET</div>
<div class="a" style="left:255px;top:10.0px;width:253px;height:11px;border:1px solid #8e8e8e;background:#fff"></div>
<div class="t" style="left:258.5px;top:12.3px;font-size:6.7px;color:#3c3c3c;transform:scaleX(0.972);">Polyethylene Terephthalate(PET)&nbsp; Transmission(Microscope)</div>
<div class="a" style="left:0px;top:20.0px;width:27px;height:11.3px;border:1.4px solid #4c4c4c;background:linear-gradient(90deg,#fdfdfd,#d8d8d8)"></div>
<div class="t" style="left:3.5px;top:22.3px;font-size:6.7px;color:#222;transform:scaleX(0.950);">3</div>
<div class="a" style="left:26px;top:20.0px;width:44px;height:11px;border:1px solid #8e8e8e;background:#fff"></div>
<div class="t" style="left:55.0px;top:22.3px;font-size:6.7px;color:#3c3c3c;transform:scaleX(0.985);">832</div>
<div class="a" style="left:69px;top:20.0px;width:94px;height:11px;border:1px solid #8e8e8e;background:#fff"></div>
<div class="t" style="left:72.5px;top:22.3px;font-size:6.7px;color:#3c3c3c;transform:scaleX(0.972);">41 - IRs Polymer2</div>
<div class="a" style="left:162px;top:20.0px;width:94px;height:11px;border:1px solid #8e8e8e;background:#fff"></div>
<div class="t" style="left:165.5px;top:22.3px;font-size:6.7px;color:#3c3c3c;transform:scaleX(0.972);">PET</div>
<div class="a" style="left:255px;top:20.0px;width:253px;height:11px;border:1px solid #8e8e8e;background:#fff"></div>
<div class="t" style="left:258.5px;top:22.3px;font-size:6.7px;color:#3c3c3c;transform:scaleX(0.972);">.s.d.s. Poly(ethylene terephthalate)</div>
<div class="a" style="left:0px;top:30.0px;width:27px;height:11.3px;border:1.4px solid #4c4c4c;background:linear-gradient(90deg,#fdfdfd,#d8d8d8)"></div>
<div class="t" style="left:3.5px;top:32.3px;font-size:6.7px;color:#222;transform:scaleX(0.950);">4</div>
<div class="a" style="left:26px;top:30.0px;width:44px;height:11px;border:1px solid #8e8e8e;background:#fff"></div>
<div class="t" style="left:55.0px;top:32.3px;font-size:6.7px;color:#3c3c3c;transform:scaleX(0.985);">827</div>
<div class="a" style="left:69px;top:30.0px;width:94px;height:11px;border:1px solid #8e8e8e;background:#fff"></div>
<div class="t" style="left:72.5px;top:32.3px;font-size:6.7px;color:#3c3c3c;transform:scaleX(0.972);">50 - T-Polymer2</div>
<div class="a" style="left:162px;top:30.0px;width:94px;height:11px;border:1px solid #8e8e8e;background:#fff"></div>
<div class="t" style="left:165.5px;top:32.3px;font-size:6.7px;color:#3c3c3c;transform:scaleX(0.972);">Polyester</div>
<div class="a" style="left:255px;top:30.0px;width:253px;height:11px;border:1px solid #8e8e8e;background:#fff"></div>
<div class="t" style="left:258.5px;top:32.3px;font-size:6.7px;color:#3c3c3c;transform:scaleX(0.972);">Polyester Film(TOYOBO ESTER FILM &amp; ESPET FILM)&nbsp; Transmission(Microscope)</div>
<div class="a" style="left:0px;top:40.0px;width:27px;height:11.3px;border:1.4px solid #4c4c4c;background:linear-gradient(90deg,#fdfdfd,#d8d8d8)"></div>
<div class="t" style="left:3.5px;top:42.3px;font-size:6.7px;color:#222;transform:scaleX(0.950);">5</div>
<div class="a" style="left:26px;top:40.0px;width:44px;height:11px;border:1px solid #8e8e8e;background:#fff"></div>
<div class="t" style="left:55.0px;top:42.3px;font-size:6.7px;color:#3c3c3c;transform:scaleX(0.985);">825</div>
<div class="a" style="left:69px;top:40.0px;width:94px;height:11px;border:1px solid #8e8e8e;background:#fff"></div>
<div class="t" style="left:72.5px;top:42.3px;font-size:6.7px;color:#3c3c3c;transform:scaleX(0.972);">56 - T-Polymer2</div>
<div class="a" style="left:162px;top:40.0px;width:94px;height:11px;border:1px solid #8e8e8e;background:#fff"></div>
<div class="t" style="left:165.5px;top:42.3px;font-size:6.7px;color:#3c3c3c;transform:scaleX(0.972);">PBT</div>
<div class="a" style="left:255px;top:40.0px;width:253px;height:11px;border:1px solid #8e8e8e;background:#fff"></div>
<div class="t" style="left:258.5px;top:42.3px;font-size:6.7px;color:#3c3c3c;transform:scaleX(0.972);">Polybutylene Terephthalate(PBT)&nbsp; Transmission(Microscope)</div>
<div class="a" style="left:0px;top:50.0px;width:27px;height:11.3px;border:1.4px solid #4c4c4c;background:linear-gradient(90deg,#fdfdfd,#d8d8d8)"></div>
<div class="t" style="left:3.5px;top:52.3px;font-size:6.7px;color:#222;transform:scaleX(0.950);">6</div>
<div class="a" style="left:26px;top:50.0px;width:44px;height:11px;border:1px solid #8e8e8e;background:#fff"></div>
<div class="t" style="left:55.0px;top:52.3px;font-size:6.7px;color:#3c3c3c;transform:scaleX(0.985);">799</div>
<div class="a" style="left:69px;top:50.0px;width:94px;height:11px;border:1px solid #8e8e8e;background:#fff"></div>
<div class="t" style="left:72.5px;top:52.3px;font-size:6.7px;color:#3c3c3c;transform:scaleX(0.972);">49 - T-Polymer2</div>
<div class="a" style="left:162px;top:50.0px;width:94px;height:11px;border:1px solid #8e8e8e;background:#fff"></div>
<div class="t" style="left:165.5px;top:52.3px;font-size:6.7px;color:#3c3c3c;transform:scaleX(0.972);">Polyester</div>
<div class="a" style="left:255px;top:50.0px;width:253px;height:11px;border:1px solid #8e8e8e;background:#fff"></div>
<div class="t" style="left:258.5px;top:52.3px;font-size:6.7px;color:#3c3c3c;transform:scaleX(0.972);">Polyester Film(SEKISUI ESTINA P320-P321)&nbsp; Transmission(Microscope)</div>
<div class="a" style="left:0px;top:60.0px;width:27px;height:11.3px;border:1.4px solid #4c4c4c;background:linear-gradient(90deg,#fdfdfd,#d8d8d8)"></div>
<div class="t" style="left:3.5px;top:62.3px;font-size:6.7px;color:#222;transform:scaleX(0.950);">7</div>
<div class="a" style="left:26px;top:60.0px;width:44px;height:11px;border:1px solid #8e8e8e;background:#fff"></div>
<div class="t" style="left:55.0px;top:62.3px;font-size:6.7px;color:#3c3c3c;transform:scaleX(0.985);">795</div>
<div class="a" style="left:69px;top:60.0px;width:94px;height:11px;border:1px solid #8e8e8e;background:#fff"></div>
<div class="t" style="left:72.5px;top:62.3px;font-size:6.7px;color:#3c3c3c;transform:scaleX(0.972);">47 - T-Polymer2</div>
<div class="a" style="left:162px;top:60.0px;width:94px;height:11px;border:1px solid #8e8e8e;background:#fff"></div>
<div class="t" style="left:165.5px;top:62.3px;font-size:6.7px;color:#3c3c3c;transform:scaleX(0.972);">Polyester</div>
<div class="a" style="left:255px;top:60.0px;width:253px;height:11px;border:1px solid #8e8e8e;background:#fff"></div>
<div class="t" style="left:258.5px;top:62.3px;font-size:6.7px;color:#3c3c3c;transform:scaleX(0.972);">Polyester Elastomer&nbsp; Transmission(Microscope)</div>
<div class="a" style="left:0px;top:70.0px;width:27px;height:11.3px;border:1.4px solid #4c4c4c;background:linear-gradient(90deg,#fdfdfd,#d8d8d8)"></div>
<div class="t" style="left:3.5px;top:72.3px;font-size:6.7px;color:#222;transform:scaleX(0.950);">8</div>
<div class="a" style="left:26px;top:70.0px;width:44px;height:11px;border:1px solid #8e8e8e;background:#fff"></div>
<div class="t" style="left:55.0px;top:72.3px;font-size:6.7px;color:#3c3c3c;transform:scaleX(0.985);">793</div>
<div class="a" style="left:69px;top:70.0px;width:94px;height:11px;border:1px solid #8e8e8e;background:#fff"></div>
<div class="t" style="left:72.5px;top:72.3px;font-size:6.7px;color:#3c3c3c;transform:scaleX(0.972);">50 - ATR-Polymer2</div>
<div class="a" style="left:162px;top:70.0px;width:94px;height:11px;border:1px solid #8e8e8e;background:#fff"></div>
<div class="t" style="left:165.5px;top:72.3px;font-size:6.7px;color:#3c3c3c;transform:scaleX(0.972);">D_Polyester4</div>
<div class="a" style="left:255px;top:70.0px;width:253px;height:11px;border:1px solid #8e8e8e;background:#fff"></div>
<div class="t" style="left:258.5px;top:72.3px;font-size:6.7px;color:#3c3c3c;transform:scaleX(0.972);">Polyester Film(TOYOBO ESTER FILM &amp; ESPET FILM)&nbsp; DuraSamplIR-II</div>
<div class="a" style="left:0px;top:80.0px;width:27px;height:11.3px;border:1.4px solid #4c4c4c;background:linear-gradient(90deg,#fdfdfd,#d8d8d8)"></div>
<div class="t" style="left:3.5px;top:82.3px;font-size:6.7px;color:#222;transform:scaleX(0.950);">9</div>
<div class="a" style="left:26px;top:80.0px;width:44px;height:11px;border:1px solid #8e8e8e;background:#fff"></div>
<div class="t" style="left:55.0px;top:82.3px;font-size:6.7px;color:#3c3c3c;transform:scaleX(0.985);">786</div>
<div class="a" style="left:69px;top:80.0px;width:94px;height:11px;border:1px solid #8e8e8e;background:#fff"></div>
<div class="t" style="left:72.5px;top:82.3px;font-size:6.7px;color:#3c3c3c;transform:scaleX(0.972);">47 - ATR-Polymer2</div>
<div class="a" style="left:162px;top:80.0px;width:94px;height:11px;border:1px solid #8e8e8e;background:#fff"></div>
<div class="t" style="left:165.5px;top:82.3px;font-size:6.7px;color:#3c3c3c;transform:scaleX(0.972);">D_Polyester1</div>
<div class="a" style="left:255px;top:80.0px;width:253px;height:11px;border:1px solid #8e8e8e;background:#fff"></div>
<div class="t" style="left:258.5px;top:82.3px;font-size:6.7px;color:#3c3c3c;transform:scaleX(0.972);">Polyester Elastomer&nbsp; DuraSamplIR-II</div>
<div class="a" style="left:0px;top:90.0px;width:27px;height:11.3px;border:1.4px solid #4c4c4c;background:linear-gradient(90deg,#fdfdfd,#d8d8d8)"></div>
<div class="t" style="left:3.5px;top:92.3px;font-size:6.7px;color:#222;transform:scaleX(0.950);">10</div>
<div class="a" style="left:26px;top:90.0px;width:44px;height:11px;border:1px solid #8e8e8e;background:#fff"></div>
<div class="t" style="left:55.0px;top:92.3px;font-size:6.7px;color:#3c3c3c;transform:scaleX(0.985);">783</div>
<div class="a" style="left:69px;top:90.0px;width:94px;height:11px;border:1px solid #8e8e8e;background:#fff"></div>
<div class="t" style="left:72.5px;top:92.3px;font-size:6.7px;color:#3c3c3c;transform:scaleX(0.972);">79 - ATR-Polymer2</div>
<div class="a" style="left:162px;top:90.0px;width:94px;height:11px;border:1px solid #8e8e8e;background:#fff"></div>
<div class="t" style="left:165.5px;top:92.3px;font-size:6.7px;color:#3c3c3c;transform:scaleX(0.972);">D_PET</div>
<div class="a" style="left:255px;top:90.0px;width:253px;height:11px;border:1px solid #8e8e8e;background:#fff"></div>
<div class="t" style="left:258.5px;top:92.3px;font-size:6.7px;color:#3c3c3c;transform:scaleX(0.972);">Polyethylene Terephthalate(PET)&nbsp; DuraSamplIR-II</div>
<div class="a" style="left:0px;top:100.0px;width:27px;height:11.3px;border:1.4px solid #4c4c4c;background:linear-gradient(90deg,#fdfdfd,#d8d8d8)"></div>
<div class="t" style="left:3.5px;top:102.3px;font-size:6.7px;color:#222;transform:scaleX(0.950);">11</div>
<div class="a" style="left:26px;top:100.0px;width:44px;height:11px;border:1px solid #8e8e8e;background:#fff"></div>
<div class="t" style="left:55.0px;top:102.3px;font-size:6.7px;color:#3c3c3c;transform:scaleX(0.985);">776</div>
<div class="a" style="left:69px;top:100.0px;width:94px;height:11px;border:1px solid #8e8e8e;background:#fff"></div>
<div class="t" style="left:72.5px;top:102.3px;font-size:6.7px;color:#3c3c3c;transform:scaleX(0.972);">48 - ATR-Polymer2</div>
<div class="a" style="left:162px;top:100.0px;width:94px;height:11px;border:1px solid #8e8e8e;background:#fff"></div>
<div class="t" style="left:165.5px;top:102.3px;font-size:6.7px;color:#3c3c3c;transform:scaleX(0.972);">D_Polyester2</div>
<div class="a" style="left:255px;top:100.0px;width:253px;height:11px;border:1px solid #8e8e8e;background:#fff"></div>
<div class="t" style="left:258.5px;top:102.3px;font-size:6.7px;color:#3c3c3c;transform:scaleX(0.972);">Polyester Film(TAIKO-FE)&nbsp; DuraSamplIR-II</div>
<div class="a" style="left:0px;top:110.0px;width:27px;height:11.3px;border:1.4px solid #4c4c4c;background:linear-gradient(90deg,#fdfdfd,#d8d8d8)"></div>
<div class="t" style="left:3.5px;top:112.3px;font-size:6.7px;color:#222;transform:scaleX(0.950);">12</div>
<div class="a" style="left:26px;top:110.0px;width:44px;height:11px;border:1px solid #8e8e8e;background:#fff"></div>
<div class="t" style="left:55.0px;top:112.3px;font-size:6.7px;color:#3c3c3c;transform:scaleX(0.985);">776</div>
<div class="a" style="left:69px;top:110.0px;width:94px;height:11px;border:1px solid #8e8e8e;background:#fff"></div>
<div class="t" style="left:72.5px;top:112.3px;font-size:6.7px;color:#3c3c3c;transform:scaleX(0.972);">49 - ATR-Polymer2</div>
<div class="a" style="left:162px;top:110.0px;width:94px;height:11px;border:1px solid #8e8e8e;background:#fff"></div>
<div class="t" style="left:165.5px;top:112.3px;font-size:6.7px;color:#3c3c3c;transform:scaleX(0.972);">D_Polyester3</div>
<div class="a" style="left:255px;top:110.0px;width:253px;height:11px;border:1px solid #8e8e8e;background:#fff"></div>
<div class="t" style="left:258.5px;top:112.3px;font-size:6.7px;color:#3c3c3c;transform:scaleX(0.972);">Polyester Film(SEKISUI ESTINA P320-P321)&nbsp; DuraSamplIR-II</div>
<div class="a" style="left:0px;top:120.0px;width:27px;height:11.3px;border:1.4px solid #4c4c4c;background:linear-gradient(90deg,#fdfdfd,#d8d8d8)"></div>
<div class="t" style="left:3.5px;top:122.3px;font-size:6.7px;color:#222;transform:scaleX(0.950);">13</div>
<div class="a" style="left:26px;top:120.0px;width:44px;height:11px;border:1px solid #8e8e8e;background:#fff"></div>
<div class="t" style="left:55.0px;top:122.3px;font-size:6.7px;color:#3c3c3c;transform:scaleX(0.985);">775</div>
<div class="a" style="left:69px;top:120.0px;width:94px;height:11px;border:1px solid #8e8e8e;background:#fff"></div>
<div class="t" style="left:72.5px;top:122.3px;font-size:6.7px;color:#3c3c3c;transform:scaleX(0.972);">109 - ATR-Polymer2</div>
<div class="a" style="left:162px;top:120.0px;width:94px;height:11px;border:1px solid #8e8e8e;background:#fff"></div>
<div class="t" style="left:165.5px;top:122.3px;font-size:6.7px;color:#3c3c3c;transform:scaleX(0.972);">D_PET2</div>
<div class="a" style="left:255px;top:120.0px;width:253px;height:11px;border:1px solid #8e8e8e;background:#fff"></div>
<div class="t" style="left:258.5px;top:122.3px;font-size:6.7px;color:#3c3c3c;transform:scaleX(0.972);">Polyethylene Terephthalate(PET)&nbsp; DuraSamplIR-II</div>
</div>
<div class="a" style="left:651px;top:437px;width:10px;height:135px;background:#ececee"></div>
<div class="a" style="left:651px;top:447px;width:10px;height:68px;border:1px solid #a3a4ad;border-radius:2px;background:linear-gradient(90deg,#f4f4f6,#d8d9df)"></div>
<div class="a" style="left:653.5px;top:478px;width:5px;height:1px;background:#8a8c96"></div>
<div class="a" style="left:653.5px;top:480px;width:5px;height:1px;background:#8a8c96"></div>
<div class="a" style="left:653.5px;top:482px;width:5px;height:1px;background:#8a8c96"></div>
<div class="a" style="left:653.5px;top:440px;border:2.5px solid transparent;border-bottom:3px solid #333;border-top:0"></div>
<div class="a" style="left:653.5px;top:565px;border:2.5px solid transparent;border-top:3px solid #333;border-bottom:0"></div>
<div class="a" style="left:231px;top:586px;width:7.5px;height:7.5px;border:1px solid #9a9ba5;background:#f4f4f4"></div>
<div class="t" style="left:240.0px;top:586.7px;font-size:7px;color:#222;transform:scaleX(0.991);">Overwrite to last result</div>
<div class="btn" style="left:385px;top:581px;width:102px;height:12.6px"></div>
<div class="t" style="left:411.6px;top:584.7px;font-size:7px;color:#333;transform:scaleX(0.950);">Fix search result</div>
<div class="btn" style="left:506px;top:581px;width:41px;height:12.6px"></div>
<div class="t" style="left:518.0px;top:584.7px;font-size:7px;color:#333;transform:scaleX(0.950);">Close</div>
<div class="a" style="left:663px;top:81px;width:134px;height:522px;background:#f0f0f1"></div>
<div class="a" style="left:664.2px;top:81px;width:2px;height:522px;background:#7e8088"></div>
<div class="a" style="left:660.5px;top:109px;width:3.7px;height:494px;background:#f7f7f8"></div>
<div class="a" style="left:669px;top:85.5px;width:124px;height:3.5px;background:linear-gradient(#fafafa,#d0d0d4 60%,#e4e4e6)"></div>
<div class="a" style="left:667.5px;top:105px;width:124.5px;height:496px;background:#fff;border:1px solid #d4d5da;border-left:3px solid #dcdce0"></div>
<div class="a" style="left:671px;top:93px;width:30px;height:13px;background:#fff;border:1px solid #c4c5cd;border-bottom:0"></div>
<div class="t" style="left:674.2px;top:96.7px;font-size:6.5px;color:#222;transform:scaleX(0.973);">General</div>
<div class="a" style="left:701px;top:95px;width:36px;height:11px;background:linear-gradient(#f6f6f8,#e0e1e6);border:1px solid #b4b5be"></div>
<div class="t" style="left:704.8px;top:97.7px;font-size:6.5px;color:#222;transform:scaleX(1.025);">Spectrum</div>
<div class="a" style="left:737px;top:95px;width:24px;height:11px;background:linear-gradient(#f6f6f8,#e0e1e6);border:1px solid #b4b5be"></div>
<div class="t" style="left:740.4px;top:97.7px;font-size:6.5px;color:#222;transform:scaleX(0.950);">Peaks</div>
<div class="a" style="left:676px;top:113px;width:90px;height:188px;border:1px solid #ececf0;border-radius:2px"></div>
<div class="t" style="left:679.3px;top:109.9px;font-size:6.5px;color:#222;transform:scaleX(0.950);background:#fff;padding:0 1px;">Library</div>
<div class="a" style="left:679px;top:121.5px;width:83px;height:128.5px;border:1px solid #c4c6ce;background:#fff;overflow:hidden">
<div class="a" style="left:1.5px;top:1.7px;width:7px;height:7px;border:1px solid #bcbec8;background:#f6f6f8"></div>
<svg class="a" style="left:2.5px;top:2.5px" width="6" height="6"><path d="M0.8 3l1.6 1.8L5.2 0.8" stroke="#3b50a8" stroke-width="1.05" fill="none"/></svg>
<div class="a" style="left:9px;top:1.1px;width:62px;height:9.3px;background:#3a8be0"></div>
<div class="t" style="left:9.8px;top:1.8px;font-size:7px;color:#fff;transform:scaleX(0.950);">A_FoodAdditives2</div>
<div class="a" style="left:1.5px;top:11.6px;width:7px;height:7px;border:1px solid #bcbec8;background:#f6f6f8"></div>
<svg class="a" style="left:2.5px;top:12.4px" width="6" height="6"><path d="M0.8 3l1.6 1.8L5.2 0.8" stroke="#3b50a8" stroke-width="1.05" fill="none"/></svg>
<div class="t" style="left:9.8px;top:11.7px;font-size:7px;color:#2c2c2c;transform:scaleX(0.950);">ATR-Inorganic2</div>
<div class="a" style="left:1.5px;top:21.5px;width:7px;height:7px;border:1px solid #bcbec8;background:#f6f6f8"></div>
<svg class="a" style="left:2.5px;top:22.3px" width="6" height="6"><path d="M0.8 3l1.6 1.8L5.2 0.8" stroke="#3b50a8" stroke-width="1.05" fill="none"/></svg>
<div class="t" style="left:9.8px;top:21.6px;font-size:7px;color:#2c2c2c;transform:scaleX(0.950);">ATR-Organic2</div>
<div class="a" style="left:1.5px;top:31.4px;width:7px;height:7px;border:1px solid #bcbec8;background:#f6f6f8"></div>
<svg class="a" style="left:2.5px;top:32.2px" width="6" height="6"><path d="M0.8 3l1.6 1.8L5.2 0.8" stroke="#3b50a8" stroke-width="1.05" fill="none"/></svg>
<div class="t" style="left:9.8px;top:31.5px;font-size:7px;color:#2c2c2c;transform:scaleX(0.950);">ATR-Polymer2</div>
<div class="a" style="left:1.5px;top:41.3px;width:7px;height:7px;border:1px solid #bcbec8;background:#f6f6f8"></div>
<svg class="a" style="left:2.5px;top:42.1px" width="6" height="6"><path d="M0.8 3l1.6 1.8L5.2 0.8" stroke="#3b50a8" stroke-width="1.05" fill="none"/></svg>
<div class="t" style="left:9.8px;top:41.4px;font-size:7px;color:#2c2c2c;transform:scaleX(0.950);">IRs Agrichemicals</div>
<div class="a" style="left:1.5px;top:51.2px;width:7px;height:7px;border:1px solid #bcbec8;background:#f6f6f8"></div>
<svg class="a" style="left:2.5px;top:52.0px" width="6" height="6"><path d="M0.8 3l1.6 1.8L5.2 0.8" stroke="#3b50a8" stroke-width="1.05" fill="none"/></svg>
<div class="t" style="left:9.8px;top:51.3px;font-size:7px;color:#2c2c2c;transform:scaleX(0.950);">IRs ATR Reagent2</div>
<div class="a" style="left:1.5px;top:61.1px;width:7px;height:7px;border:1px solid #bcbec8;background:#f6f6f8"></div>
<svg class="a" style="left:2.5px;top:61.9px" width="6" height="6"><path d="M0.8 3l1.6 1.8L5.2 0.8" stroke="#3b50a8" stroke-width="1.05" fill="none"/></svg>
<div class="t" style="left:9.8px;top:61.2px;font-size:7px;color:#2c2c2c;transform:scaleX(0.950);">IRs Pharmaceuticals</div>
<div class="a" style="left:1.5px;top:71.0px;width:7px;height:7px;border:1px solid #bcbec8;background:#f6f6f8"></div>
<svg class="a" style="left:2.5px;top:71.8px" width="6" height="6"><path d="M0.8 3l1.6 1.8L5.2 0.8" stroke="#3b50a8" stroke-width="1.05" fill="none"/></svg>
<div class="t" style="left:9.8px;top:71.1px;font-size:7px;color:#2c2c2c;transform:scaleX(0.950);">IRs Polymer2</div>
<div class="a" style="left:1.5px;top:80.9px;width:7px;height:7px;border:1px solid #bcbec8;background:#f6f6f8"></div>
<svg class="a" style="left:2.5px;top:81.7px" width="6" height="6"><path d="M0.8 3l1.6 1.8L5.2 0.8" stroke="#3b50a8" stroke-width="1.05" fill="none"/></svg>
<div class="t" style="left:9.8px;top:81.0px;font-size:7px;color:#2c2c2c;transform:scaleX(0.950);">IRs Reagent2</div>
<div class="a" style="left:1.5px;top:90.8px;width:7px;height:7px;border:1px solid #bcbec8;background:#f6f6f8"></div>
<svg class="a" style="left:2.5px;top:91.6px" width="6" height="6"><path d="M0.8 3l1.6 1.8L5.2 0.8" stroke="#3b50a8" stroke-width="1.05" fill="none"/></svg>
<div class="t" style="left:9.8px;top:90.9px;font-size:7px;color:#2c2c2c;transform:scaleX(0.950);">T_FoodAdditives2</div>
<div class="a" style="left:1.5px;top:100.7px;width:7px;height:7px;border:1px solid #bcbec8;background:#f6f6f8"></div>
<svg class="a" style="left:2.5px;top:101.5px" width="6" height="6"><path d="M0.8 3l1.6 1.8L5.2 0.8" stroke="#3b50a8" stroke-width="1.05" fill="none"/></svg>
<div class="t" style="left:9.8px;top:100.8px;font-size:7px;color:#2c2c2c;transform:scaleX(0.950);">T-Inorganic2</div>
<div class="a" style="left:1.5px;top:110.6px;width:7px;height:7px;border:1px solid #bcbec8;background:#f6f6f8"></div>
<svg class="a" style="left:2.5px;top:111.4px" width="6" height="6"><path d="M0.8 3l1.6 1.8L5.2 0.8" stroke="#3b50a8" stroke-width="1.05" fill="none"/></svg>
<div class="t" style="left:9.8px;top:110.7px;font-size:7px;color:#2c2c2c;transform:scaleX(0.950);">T-Organic2</div>
<div class="a" style="left:1.5px;top:120.5px;width:7px;height:7px;border:1px solid #bcbec8;background:#f6f6f8"></div>
<svg class="a" style="left:2.5px;top:121.3px" width="6" height="6"><path d="M0.8 3l1.6 1.8L5.2 0.8" stroke="#3b50a8" stroke-width="1.05" fill="none"/></svg>
<div class="t" style="left:9.8px;top:120.6px;font-size:7px;color:#2c2c2c;transform:scaleX(0.950);">T-Polymer2</div>
<div class="a" style="left:72px;top:0px;width:10px;height:127px;background:#ececee"></div>
<div class="a" style="left:72px;top:9px;width:9px;height:94px;border:1px solid #a3a4ad;border-radius:2px;background:linear-gradient(90deg,#f4f4f6,#d8d9df)"></div>
<div class="a" style="left:74px;top:54px;width:5px;height:1px;background:#8a8c96"></div>
<div class="a" style="left:74px;top:56px;width:5px;height:1px;background:#8a8c96"></div>
<div class="a" style="left:74px;top:58px;width:5px;height:1px;background:#8a8c96"></div>
<div class="a" style="left:74px;top:3px;border:2.5px solid transparent;border-bottom:3px solid #333;border-top:0"></div>
<div class="a" style="left:74px;top:121px;border:2.5px solid transparent;border-top:3px solid #333;border-bottom:0"></div>
</div>
<div class="btn" style="left:677px;top:255px;width:41px;height:11px;"></div>
<div class="t" style="left:691.9px;top:257.7px;font-size:6.8px;color:#333;transform:scaleX(0.930);">Add</div>
<div class="btn" style="left:722px;top:255px;width:42px;height:11px;"></div>
<div class="t" style="left:733.9px;top:257.7px;font-size:6.8px;color:#333;transform:scaleX(0.930);">Delete</div>
<div class="btn" style="left:677px;top:270px;width:41px;height:11px;"></div>
<div class="t" style="left:684.7px;top:272.7px;font-size:6.8px;color:#333;transform:scaleX(0.930);">Select all</div>
<div class="btn" style="left:722px;top:270px;width:42px;height:11px;"></div>
<div class="t" style="left:726.7px;top:272.7px;font-size:6.8px;color:#333;transform:scaleX(0.930);">Deselect all</div>
<div class="btn" style="left:677px;top:287px;width:41px;height:11px;border-color:#5a5c66;"></div>
<div class="t" style="left:681.7px;top:289.7px;font-size:6.8px;color:#333;transform:scaleX(0.930);">Information</div>
<div class="a" style="left:676px;top:309px;width:90px;height:89px;border:1px solid #ececf0;border-radius:2px"></div>
<div class="t" style="left:680.5px;top:305.7px;font-size:6.5px;color:#222;transform:scaleX(0.950);background:#fff;padding:0 1px;">Parameters</div>
<div class="t" style="left:684.2px;top:316.7px;font-size:6.5px;color:#222;transform:scaleX(0.991);">Maximum hits:</div>
<div class="t" style="left:684.2px;top:341.7px;font-size:6.5px;color:#222;transform:scaleX(0.984);">Minimum quality:</div>
<div class="a" style="left:684px;top:325px;width:33.5px;height:12px;border:1px solid #e4e5ea;border-top-color:#cfd0d8;background:#fff"></div>
<div class="t" style="left:689.0px;top:328.2px;font-size:6.5px;color:#222;transform:scaleX(0.950);">20</div>
<div class="a" style="left:707px;top:325px;width:10.5px;height:12px;background:#e9eaee;border:1px solid #c0c2ca"></div>
<div class="a" style="left:707px;top:330.7px;width:10.5px;height:0.8px;background:#c0c2ca"></div>
<div class="a" style="left:710.7px;top:327px;border:1.5px solid transparent;border-bottom:2px solid #444;border-top:0"></div>
<div class="a" style="left:710.7px;top:333px;border:1.5px solid transparent;border-top:2px solid #444;border-bottom:0"></div>
<div class="a" style="left:684px;top:351.5px;width:33.5px;height:12px;border:1px solid #e4e5ea;border-top-color:#cfd0d8;background:#fff"></div>
<div class="t" style="left:689.0px;top:354.7px;font-size:6.5px;color:#222;transform:scaleX(0.950);">250</div>
<div class="a" style="left:707px;top:351.5px;width:10.5px;height:12px;background:#e9eaee;border:1px solid #c0c2ca"></div>
<div class="a" style="left:707px;top:357.2px;width:10.5px;height:0.8px;background:#c0c2ca"></div>
<div class="a" style="left:710.7px;top:353.5px;border:1.5px solid transparent;border-bottom:2px solid #444;border-top:0"></div>
<div class="a" style="left:710.7px;top:359.5px;border:1.5px solid transparent;border-top:2px solid #444;border-bottom:0"></div>
<div class="a" style="left:679px;top:372px;width:7.5px;height:7.5px;border:1px solid #9a9ba5;background:#f6f6f8"></div>
<div class="t" style="left:688.0px;top:373.7px;font-size:6.5px;color:#222;transform:scaleX(1.017);">Use wavenumber ranges</div>
<div class="btn" style="left:722px;top:382.7px;width:40px;height:11px;border-color:#cfd0d6;background:#f5f5f6;"></div>
<div class="t" style="left:728.5px;top:385.4px;font-size:6.8px;color:#a4a6b0;transform:scaleX(0.930);">Ranges...</div>
<div class="a" style="left:676px;top:408px;width:90px;height:22px;border:1px solid #ececf0;border-radius:2px"></div>
<div class="t" style="left:680.5px;top:404.8px;font-size:6.5px;color:#222;transform:scaleX(0.950);background:#fff;padding:0 1px;">Parameter file</div>
<div class="btn" style="left:679px;top:416px;width:40px;height:11px;"></div>
<div class="t" style="left:692.0px;top:418.7px;font-size:6.8px;color:#333;transform:scaleX(0.930);">Load</div>
<div class="btn" style="left:722px;top:416px;width:40px;height:11px;"></div>
<div class="t" style="left:734.8px;top:418.7px;font-size:6.8px;color:#333;transform:scaleX(0.930);">Save</div>
<div class="btn" style="left:679px;top:437px;width:83px;height:11px;border-color:#3c7fb1;box-shadow:inset 0 0 0 1px #a6d8f4;"></div>
<div class="t" style="left:696.1px;top:439.7px;font-size:6.8px;color:#333;transform:scaleX(0.930);">Spectrum Search</div>
<div class="btn" style="left:679px;top:453px;width:83px;height:11px;"></div>
<div class="t" style="left:702.4px;top:455.7px;font-size:6.8px;color:#333;transform:scaleX(0.930);">Peak Search</div>
<div class="btn" style="left:679px;top:469px;width:83px;height:11px;"></div>
<div class="t" style="left:703.8px;top:471.7px;font-size:6.8px;color:#333;transform:scaleX(0.930);">Text Search</div>
<div class="btn" style="left:679px;top:485px;width:83px;height:11px;"></div>
<div class="t" style="left:691.8px;top:487.7px;font-size:6.8px;color:#333;transform:scaleX(0.930);">Combination Search</div>
<div class="a" style="left:2px;top:603px;width:795px;height:13px;background:linear-gradient(#f1f0f0,#f6f3f2);border-top:1px solid #dcdde2"></div>
<div class="t" style="left:3.5px;top:607.9px;font-size:7px;color:#222;transform:scaleX(0.914);">Ready</div>
<div class="t" style="left:651.0px;top:607.9px;font-size:7px;color:#222;transform:scaleX(0.955);">1701.23 cm-1, 0.0499443 AI</div>
<div class="t" style="left:756.0px;top:607.9px;font-size:7px;color:#222;transform:scaleX(1.066);">NUM</div>
</body></html>
